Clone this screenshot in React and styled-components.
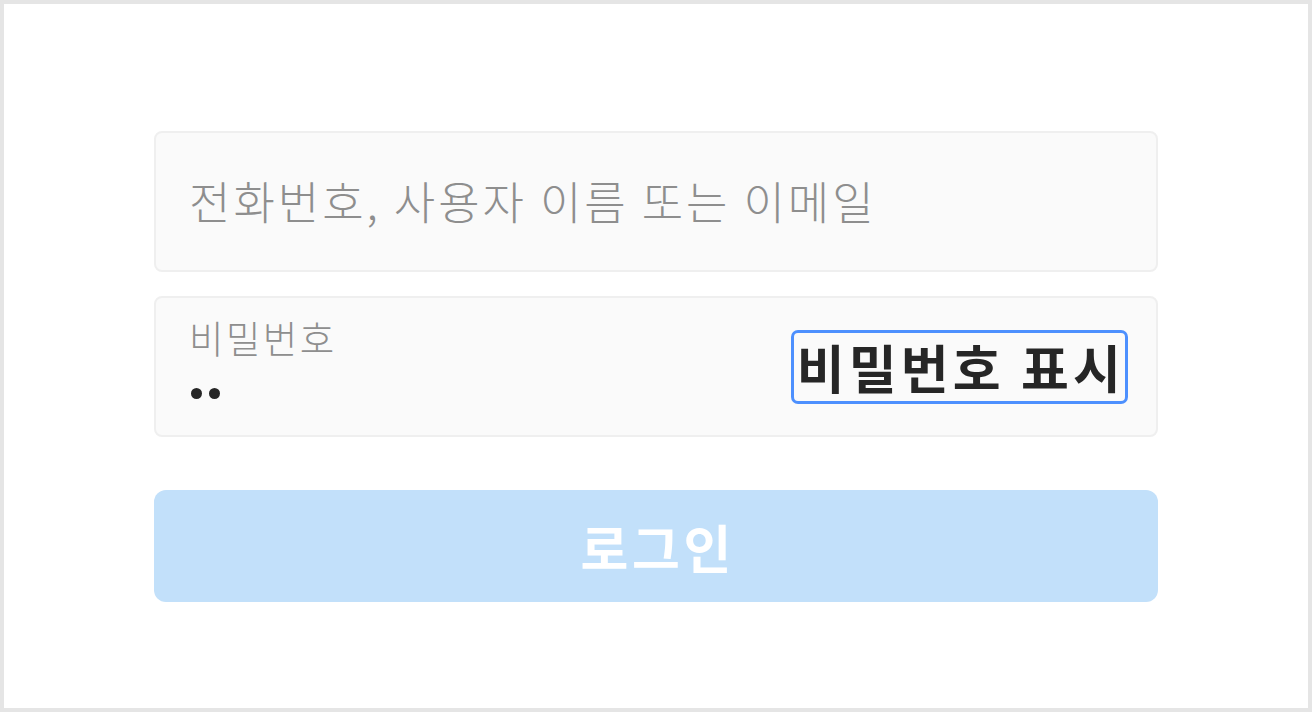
import React from 'react';
import styled, { createGlobalStyle } from 'styled-components';

const GlobalStyle = createGlobalStyle`
    html, body {
        margin: 0;
        padding: 0;
        background: #ffffff;
    }
    * {
        box-sizing: border-box;
    }
`;

const font = `"Noto Sans CJK KR", "Noto Sans", sans-serif`;

const Frame = styled.div`
    width: 1312px;
    height: 712px;
    border: 4px solid #e5e5e5;
    padding-top: 127px;
    display: flex;
    flex-direction: column;
    align-items: center;
    font-family: ${font};
`;

const Form = styled.form`
    width: 1004px;
    display: flex;
    flex-direction: column;
`;

const Field = styled.label`
    height: 141px;
    margin-top: ${(p) => p.$gap || 0}px;
    border: 2px solid #efefef;
    border-radius: 8px;
    background: #fafafa;
    display: flex;
    align-items: center;
    padding: 0 31px ${(p) => p.$lift || 0}px 33px;
`;

const Stack = styled.div`
    flex: 1;
    align-self: stretch;
    display: flex;
    flex-direction: column;
    padding-top: 18px;
`;

const Input = styled.input`
    width: 100%;
    border: none;
    outline: none;
    background: transparent;
    padding: 0;
    font-family: ${font};
    font-size: 45px;
    font-weight: 300;
    letter-spacing: 3px;
    color: #262626;

    &::placeholder {
        color: #8e8e8e;
    }
`;

const FloatLabel = styled.span`
    font-size: 37.5px;
    font-weight: 300;
    line-height: 42px;
    letter-spacing: 2.4px;
    color: #8e8e8e;
`;

const Dots = styled.span`
    display: flex;
    gap: 7px;
    margin-top: 30px;
    padding-left: 2px;
`;

const Dot = styled.i`
    width: 11px;
    height: 11px;
    border-radius: 50%;
    background: #262626;
`;

const ShowButton = styled.button`
    height: 68px;
    padding: 0 0 0 3px;
    border: none;
    background: transparent;
    font-family: ${font};
    font-size: 52px;
    font-weight: 700;
    line-height: 68px;
    letter-spacing: 4.2px;
    color: #262626;
    border-radius: 4px;
    outline: 3px solid #4d90fe;
    white-space: nowrap;
`;

const Submit = styled.button`
    margin-top: 53px;
    height: 112px;
    border: none;
    border-radius: 12px;
    background: #c2e0fa;
    color: #ffffff;
    font-family: ${font};
    font-size: 52px;
    font-weight: 700;
    letter-spacing: 3.7px;
    text-indent: 3.7px;
`;

export default function App() {
    return (
        <>
            <GlobalStyle />
            <Frame>
                <Form onSubmit={(e) => e.preventDefault()}>
                    <Field $lift={2}>
                        <Input placeholder="전화번호, 사용자 이름 또는 이메일" />
                    </Field>
                    <Field $gap={24}>
                        <Stack>
                            <FloatLabel>비밀번호</FloatLabel>
                            <Dots>
                                <Dot />
                                <Dot />
                            </Dots>
                        </Stack>
                        <ShowButton type="button">비밀번호 표시</ShowButton>
                    </Field>
                    <Submit type="submit" disabled>로그인</Submit>
                </Form>
            </Frame>
        </>
    );
}
